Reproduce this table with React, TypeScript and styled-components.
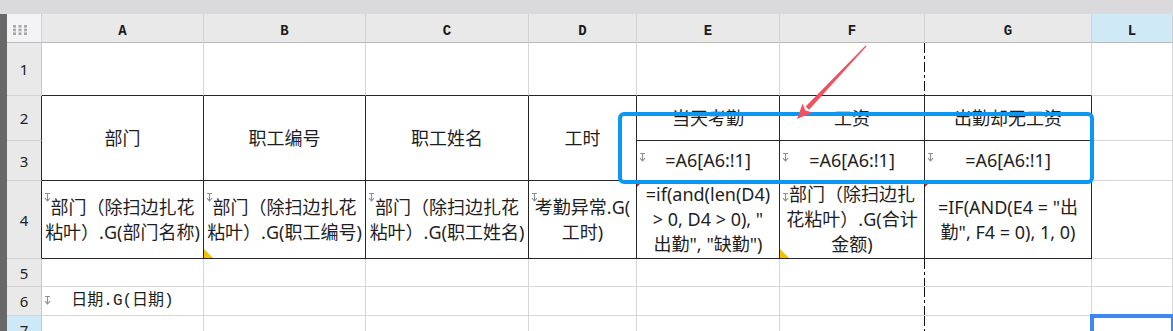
import React from "react";
import styled, { createGlobalStyle, css } from "styled-components";

const GlobalStyle = createGlobalStyle`
  html, body { margin: 0; padding: 0; background: #ffffff; }
  body { font-family: "Noto Sans", "Noto Sans CJK SC", sans-serif; }
  * { box-sizing: border-box; }
`;

type Border = "light" | "dark" | "break";

const LIGHT = "#d6d6d6";
const DARK = "#262626";

const Page = styled.div`
  position: relative;
  width: 1173px;
  height: 331px;
  overflow: hidden;
  display: flex;
  flex-direction: column;
  background: #ffffff;
`;

const TopBar = styled.div`
  flex: none;
  height: 14px;
  background: #dadadc;
`;

const Body = styled.div`
  flex: 1;
  min-height: 0;
  display: flex;
`;

const LeftStrip = styled.div`
  flex: none;
  width: 7px;
  background: #686868;
`;

const Sheet = styled.div`
  flex: none;
  display: grid;
  grid-template-columns: 35px 162px 162px 163px 108px 143px 145px 167px 81px;
  grid-template-rows: 29px 53px 45px 40px 78px 28px 29px 29px;
`;

const Corner = styled.div`
  display: flex;
  align-items: center;
  padding: 4px 0 0 6px;
  background: #f4f4f6;
  border-right: 1px solid #d2d2d2;
  border-bottom: 1px solid #b9b9b9;
`;

const ColHead = styled.div<{ $active?: boolean }>`
  display: flex;
  align-items: center;
  justify-content: center;
  padding-top: 5px;
  background: ${(p) => (p.$active ? "#cfe9f6" : "#e9e9e9")};
  border-right: 1px solid #d2d2d2;
  border-bottom: 1px solid #b9b9b9;
  font-family: "Liberation Mono", monospace;
  font-weight: 700;
  font-size: 14px;
  color: #1a1a1a;
`;

const RowHead = styled.div<{ $edge?: boolean; $active?: boolean }>`
  display: flex;
  align-items: center;
  justify-content: center;
  background: ${(p) => (p.$active ? "#cde8f6" : "#e9e9e9")};
  border-right: 1px solid ${(p) => (p.$edge ? DARK : "#c8c8c8")};
  border-bottom: 1px solid #d2d2d2;
  font-family: "Noto Sans", sans-serif;
  font-size: 15px;
  color: #222222;
`;

const breakLine = css`
  border-right: 0;
  background-image: repeating-linear-gradient(
    to bottom,
    #111111 0 10px,
    transparent 10px 13px,
    #111111 13px 16px,
    transparent 16px 19px
  );
  background-size: 1px 100%;
  background-repeat: no-repeat;
  background-position: right top;
`;

const Cell = styled.div<{
  $r: Border;
  $b: Border;
  $span?: number;
  $mono?: boolean;
  $selected?: boolean;
}>`
  position: relative;
  display: flex;
  flex-direction: column;
  align-items: center;
  justify-content: center;
  text-align: center;
  grid-row: ${(p) => (p.$span ? `span ${p.$span}` : "auto")};
  background-color: #ffffff;
  border-bottom: 1px solid ${(p) => (p.$b === "dark" ? DARK : LIGHT)};
  border-right: 1px solid ${(p) => (p.$r === "dark" ? DARK : LIGHT)};
  ${(p) => p.$r === "break" && breakLine}
  font-family: ${(p) =>
    p.$mono
      ? `"Liberation Mono", "Noto Sans CJK SC", monospace`
      : `"Noto Sans", "Noto Sans CJK SC", sans-serif`};
  font-size: ${(p) => (p.$mono ? "16px" : "18px")};
  line-height: 25px;
  color: #1e1e1e;
  ${(p) =>
    p.$selected &&
    css`
      z-index: 2;
      outline: 4px solid #3d88f0;
      outline-offset: -2px;
    `}
`;

const Line = styled.span`
  display: block;
  white-space: nowrap;
`;

const Marker = styled.span`
  position: absolute;
  top: 2px;
  left: 2px;
  width: 7px;
  height: 9px;
  display: block;
`;

const RedCorner = styled.span`
  position: absolute;
  top: 0;
  left: 0;
  width: 0;
  height: 0;
  border-top: 6px solid #e3202c;
  border-right: 6px solid transparent;
`;

const YellowCorner = styled.span`
  position: absolute;
  bottom: 0;
  left: 0;
  width: 0;
  height: 0;
  border-bottom: 9px solid #f6c000;
  border-right: 9px solid transparent;
`;

const Highlight = styled.div`
  position: absolute;
  left: 618px;
  top: 112px;
  width: 476px;
  height: 72px;
  border: 4px solid #0c97f2;
  border-radius: 6px;
  pointer-events: none;
  z-index: 5;
`;

const ArrowLayer = styled.svg`
  position: absolute;
  left: 0;
  top: 0;
  pointer-events: none;
  z-index: 6;
`;

const DotsIcon = () => (
  <svg width="15" height="10" viewBox="0 0 15 10">
    {[0, 1, 2].map((r) =>
      [0, 1, 2].map((c) => (
        <rect key={`${r}-${c}`} x={c * 5.5} y={r * 3.7} width="3" height="2.6" fill="#a8a8a8" />
      ))
    )}
  </svg>
);

const MarkerIcon = () => (
  <Marker>
    <svg width="7" height="9" viewBox="0 0 7 9">
      <path d="M1 0.5H6M3.5 0.5V8M1 5.2L3.5 8L6 5.2" stroke="#8e8e8e" strokeWidth="1.1" fill="none" />
    </svg>
  </Marker>
);

interface CellDef {
  key: string;
  text?: string[];
  r?: Border;
  b?: Border;
  span?: number;
  marker?: boolean;
  red?: boolean;
  yellow?: boolean;
  mono?: boolean;
  selected?: boolean;
}

const COLS = ["A", "B", "C", "D", "E", "F", "G", "L"];

const formula = "=A6[A6:!1]";

const rows: { n: number; edge?: boolean; active?: boolean; cells: CellDef[] }[] = [
  {
    n: 1,
    cells: [
      ...["A", "B", "C", "D", "E"].map((c) => ({ key: c + "1", b: "dark" as Border })),
      { key: "F1", b: "dark", r: "break" },
      { key: "G1", b: "dark" },
      { key: "L1" },
    ],
  },
  {
    n: 2,
    edge: true,
    cells: [
      { key: "A2", text: ["部门"], span: 2, r: "dark", b: "dark" },
      { key: "B2", text: ["职工编号"], span: 2, r: "dark", b: "dark" },
      { key: "C2", text: ["职工姓名"], span: 2, r: "dark", b: "dark" },
      { key: "D2", text: ["工时"], span: 2, r: "dark", b: "dark" },
      { key: "E2", text: ["当天考勤"], r: "dark", b: "dark" },
      { key: "F2", text: ["工资"], r: "dark", b: "dark" },
      { key: "G2", text: ["出勤却无工资"], r: "dark", b: "dark" },
      { key: "L2" },
    ],
  },
  {
    n: 3,
    edge: true,
    cells: [
      { key: "E3", text: [formula], r: "dark", b: "dark", marker: true },
      { key: "F3", text: [formula], r: "dark", b: "dark", marker: true },
      { key: "G3", text: [formula], r: "dark", b: "dark", marker: true },
      { key: "L3" },
    ],
  },
  {
    n: 4,
    edge: true,
    cells: [
      { key: "A4", text: ["部门（除扫边扎花", "粘叶）.G(部门名称)"], r: "dark", b: "dark", marker: true },
      { key: "B4", text: ["部门（除扫边扎花", "粘叶）.G(职工编号)"], r: "dark", b: "dark", marker: true, yellow: true },
      { key: "C4", text: ["部门（除扫边扎花", "粘叶）.G(职工姓名)"], r: "dark", b: "dark", marker: true },
      { key: "D4", text: ["考勤异常.G(", "工时)"], r: "dark", b: "dark", marker: true },
      {
        key: "E4",
        text: ["=if(and(len(D4)", "> 0, D4 > 0), \"", "出勤\", \"缺勤\")"],
        r: "dark",
        b: "dark",
        red: true,
      },
      { key: "F4", text: ["部门（除扫边扎", "花粘叶）.G(合计", "金额)"], r: "dark", b: "dark", marker: true, yellow: true },
      { key: "G4", text: ["=IF(AND(E4 = \"出", "勤\", F4 = 0), 1, 0)"], r: "dark", b: "dark", red: true },
      { key: "L4" },
    ],
  },
  {
    n: 5,
    cells: [
      ...["A", "B", "C", "D", "E"].map((c) => ({ key: c + "5" })),
      { key: "F5", r: "break" },
      { key: "G5" },
      { key: "L5" },
    ],
  },
  {
    n: 6,
    cells: [
      { key: "A6", text: ["日期.G(日期)"], marker: true, mono: true },
      ...["B", "C", "D", "E"].map((c) => ({ key: c + "6" })),
      { key: "F6", r: "break" },
      { key: "G6" },
      { key: "L6" },
    ],
  },
  {
    n: 7,
    active: true,
    cells: [
      ...["A", "B", "C", "D", "E"].map((c) => ({ key: c + "7" })),
      { key: "F7", r: "break" },
      { key: "G7" },
      { key: "L7", selected: true },
    ],
  },
];

// arrow geometry (page coordinates)
const tail = { x: 866, y: 46 };
const tip = { x: 797, y: 119 };
const dx = tip.x - tail.x;
const dy = tip.y - tail.y;
const len = Math.hypot(dx, dy);
const ux = dx / len;
const uy = dy / len;
const px = -uy;
const py = ux;
const headLen = 15;
const headHalf = 6.5;
const base = { x: tip.x - ux * headLen, y: tip.y - uy * headLen };
const pt = (x: number, y: number) => `${x.toFixed(1)},${y.toFixed(1)}`;
const shaft = [
  pt(tail.x + px * 0.6, tail.y + py * 0.6),
  pt(base.x + px * 2.4, base.y + py * 2.4),
  pt(base.x - px * 2.4, base.y - py * 2.4),
  pt(tail.x - px * 0.6, tail.y - py * 0.6),
].join(" ");
const head = [
  pt(tip.x, tip.y),
  pt(base.x + px * headHalf, base.y + py * headHalf),
  pt(base.x + ux * 3, base.y + uy * 3),
  pt(base.x - px * headHalf, base.y - py * headHalf),
].join(" ");

export default function App() {
  return (
    <>
      <GlobalStyle />
      <Page>
        <TopBar />
        <Body>
          <LeftStrip />
          <Sheet>
            <Corner>
              <DotsIcon />
            </Corner>
            {COLS.map((c) => (
              <ColHead key={c} $active={c === "L"}>
                {c}
              </ColHead>
            ))}
            {rows.map((row) => (
              <React.Fragment key={row.n}>
                <RowHead $edge={row.edge} $active={row.active}>
                  {row.n}
                </RowHead>
                {row.cells.map((cell) => (
                  <Cell
                    key={cell.key}
                    $r={cell.r ?? "light"}
                    $b={cell.b ?? "light"}
                    $span={cell.span}
                    $mono={cell.mono}
                    $selected={cell.selected}
                  >
                    {cell.marker && <MarkerIcon />}
                    {cell.red && <RedCorner />}
                    {cell.yellow && <YellowCorner />}
                    {cell.text?.map((t, i) => (
                      <Line key={i}>{t}</Line>
                    ))}
                  </Cell>
                ))}
              </React.Fragment>
            ))}
          </Sheet>
        </Body>
        <Highlight />
        <ArrowLayer width="1173" height="331" viewBox="0 0 1173 331">
          <polygon points={shaft} fill="#f2505f" />
          <polygon points={head} fill="#f2505f" />
        </ArrowLayer>
      </Page>
    </>
  );
}
